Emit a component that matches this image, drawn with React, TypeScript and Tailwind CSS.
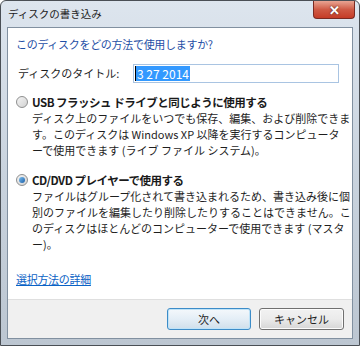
import React from 'react'

const jp = { fontFamily: '"Noto Sans CJK JP", "Noto Sans", sans-serif' }

function Radio({ checked }: { checked?: boolean }) {
  return (
    <span className="relative mt-[2px] inline-flex h-[12px] w-[12px] shrink-0 items-center justify-center rounded-full border border-[#8e8f8f] bg-gradient-to-br from-[#f4f4f4] to-[#d2d2d2]">
      {checked && <span className="h-[6px] w-[6px] rounded-full bg-gradient-to-br from-[#7cc0f0] to-[#1a5fa8]" />}
    </span>
  )
}

function Option({ checked, label, lines }: { checked?: boolean; label: string; lines: string[] }) {
  return (
    <div className="flex gap-[4px]">
      <Radio checked={checked} />
      <div className="flex flex-col">
        <div className="whitespace-nowrap text-[11.5px] font-bold leading-[16px] tracking-[-0.5px] text-[#1a1a1a]">{label}</div>
        {lines.map((l, i) => (
          <div key={i} className="whitespace-nowrap text-[11px] leading-[16px] text-[#1e1e1e]">{l}</div>
        ))}
      </div>
    </div>
  )
}

export default function App() {
  return (
    <div className="flex h-[346px] w-[360px] flex-col overflow-hidden rounded-t-[6px] border border-[#4a4f55] bg-gradient-to-b from-[#dde5ee] via-[#c9d3de] to-[#bcc6d1]" style={jp}>
      {/* title bar */}
      <div className="flex h-[26px] shrink-0 items-start justify-between pl-[7px]">
        <span className="mt-[6px] whitespace-nowrap text-[10.5px] leading-[14px] text-[#1b1b1b]">ディスクの書き込み</span>
        <button className="mr-[4px] flex h-[18px] w-[42px] items-center justify-center rounded-b-[4px] border border-t-0 border-[#7a2a22] bg-gradient-to-b from-[#e8a493] via-[#cf5a45] to-[#c53b26] text-[13px] font-bold leading-none text-white [text-shadow:0_0_2px_#3a1a14]">
          ✕
        </button>
      </div>

      {/* client */}
      <div className="mx-[6px] flex flex-1 flex-col border border-[#8190a0] bg-white">
        <div className="flex flex-1 flex-col px-[8px] pt-[8px]">
          <div className="whitespace-nowrap text-[11px] leading-[16px] tracking-[-0.3px] text-[#1f4fa6]">このディスクをどの方法で使用しますか?</div>

          <div className="mt-[12px] flex items-center pl-[2px]">
            <span className="w-[115px] shrink-0 whitespace-nowrap text-[11px] text-[#1e1e1e]">ディスクのタイトル:</span>
            <div className="flex h-[19px] w-[206px] items-center border border-[#a9c4e2] pl-[1px]">
              <span className="border-l border-black bg-[#3399ff] px-[1px] text-[12px] leading-[15px] text-white">3 27 2014</span>
            </div>
          </div>

          <div className="mt-[11px]">
            <Option
              label="USB フラッシュ ドライブと同じように使用する"
              lines={[
                'ディスク上のファイルをいつでも保存、編集、および削除できま',
                'す。このディスクは Windows XP 以降を実行するコンピュータ',
                'ーで使用できます (ライブ ファイル システム)。',
              ]}
            />
          </div>

          <div className="mt-[14px]">
            <Option
              checked
              label="CD/DVD プレイヤーで使用する"
              lines={[
                'ファイルはグループ化されて書き込まれるため、書き込み後に個',
                '別のファイルを編集したり削除したりすることはできません。こ',
                'のディスクはほとんどのコンピューターで使用できます (マスタ',
                'ー)。',
              ]}
            />
          </div>

          <a className="mt-[19px] self-start text-[11px] leading-[16px] tracking-[-0.3px] text-[#0a62c5] underline">選択方法の詳細</a>
        </div>

        {/* footer */}
        <div className="flex h-[39px] shrink-0 items-center justify-end gap-[8px] border-t border-[#dfdfdf] bg-[#f0f0f0] pr-[8px]">
          <button className="flex h-[22px] w-[84px] items-center justify-center rounded-[3px] border border-[#3c8cc8] bg-gradient-to-b from-[#f4f8fb] via-[#e4eef6] to-[#cfdfeb] text-[11px] text-[#1e1e1e] shadow-[0_0_0_1px_#bfe3f8_inset]">
            次へ
          </button>
          <button className="flex h-[22px] w-[85px] items-center justify-center rounded-[3px] border border-[#707070] bg-gradient-to-b from-[#f2f2f2] via-[#ebebeb] to-[#d6d6d6] text-[11px] text-[#1e1e1e] shadow-[0_0_0_1px_#fcfcfc_inset]">
            キャンセル
          </button>
        </div>
      </div>
      <div className="h-[6px] shrink-0" />
    </div>
  )
}
